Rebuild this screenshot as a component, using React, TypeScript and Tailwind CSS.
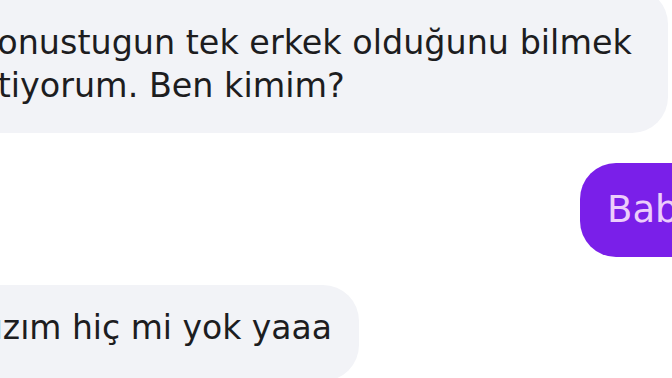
export default function App() {
  return (
    <div className="w-[672px] h-[378px] overflow-hidden bg-white flex flex-col font-['DejaVu_Sans',sans-serif] text-[#1d1d1f]">
      {/* incoming message */}
      <div className="self-start mt-[-12px] ml-[-47px] w-fit bg-[#f2f3f7] rounded-[36px] pt-[33px] pb-[26px] pl-6 pr-[36px] text-[33.4px] leading-[43px] whitespace-nowrap">
        <div>Konustugun tek erkek olduğunu bilmek</div>
        <div className="-ml-[6px]">istiyorum. Ben kimim?</div>
      </div>

      {/* outgoing message */}
      <div className="mt-[30px] ml-[580px] w-fit shrink-0 h-[94px] flex items-center bg-[#7a1fe9] rounded-[36px] pl-[27px] pr-8 text-[37px] text-[#eccdfb] whitespace-nowrap">
        Babam
      </div>

      {/* incoming message */}
      <div className="self-start mt-[28px] ml-[-52px] w-fit shrink-0 bg-[#f2f3f7] rounded-[36px] pt-[21px] pb-8 pl-6 pr-[27px] text-[33px] leading-[43px] whitespace-nowrap">
        Kızım hiç mi yok yaaa
      </div>
    </div>
  );
}
